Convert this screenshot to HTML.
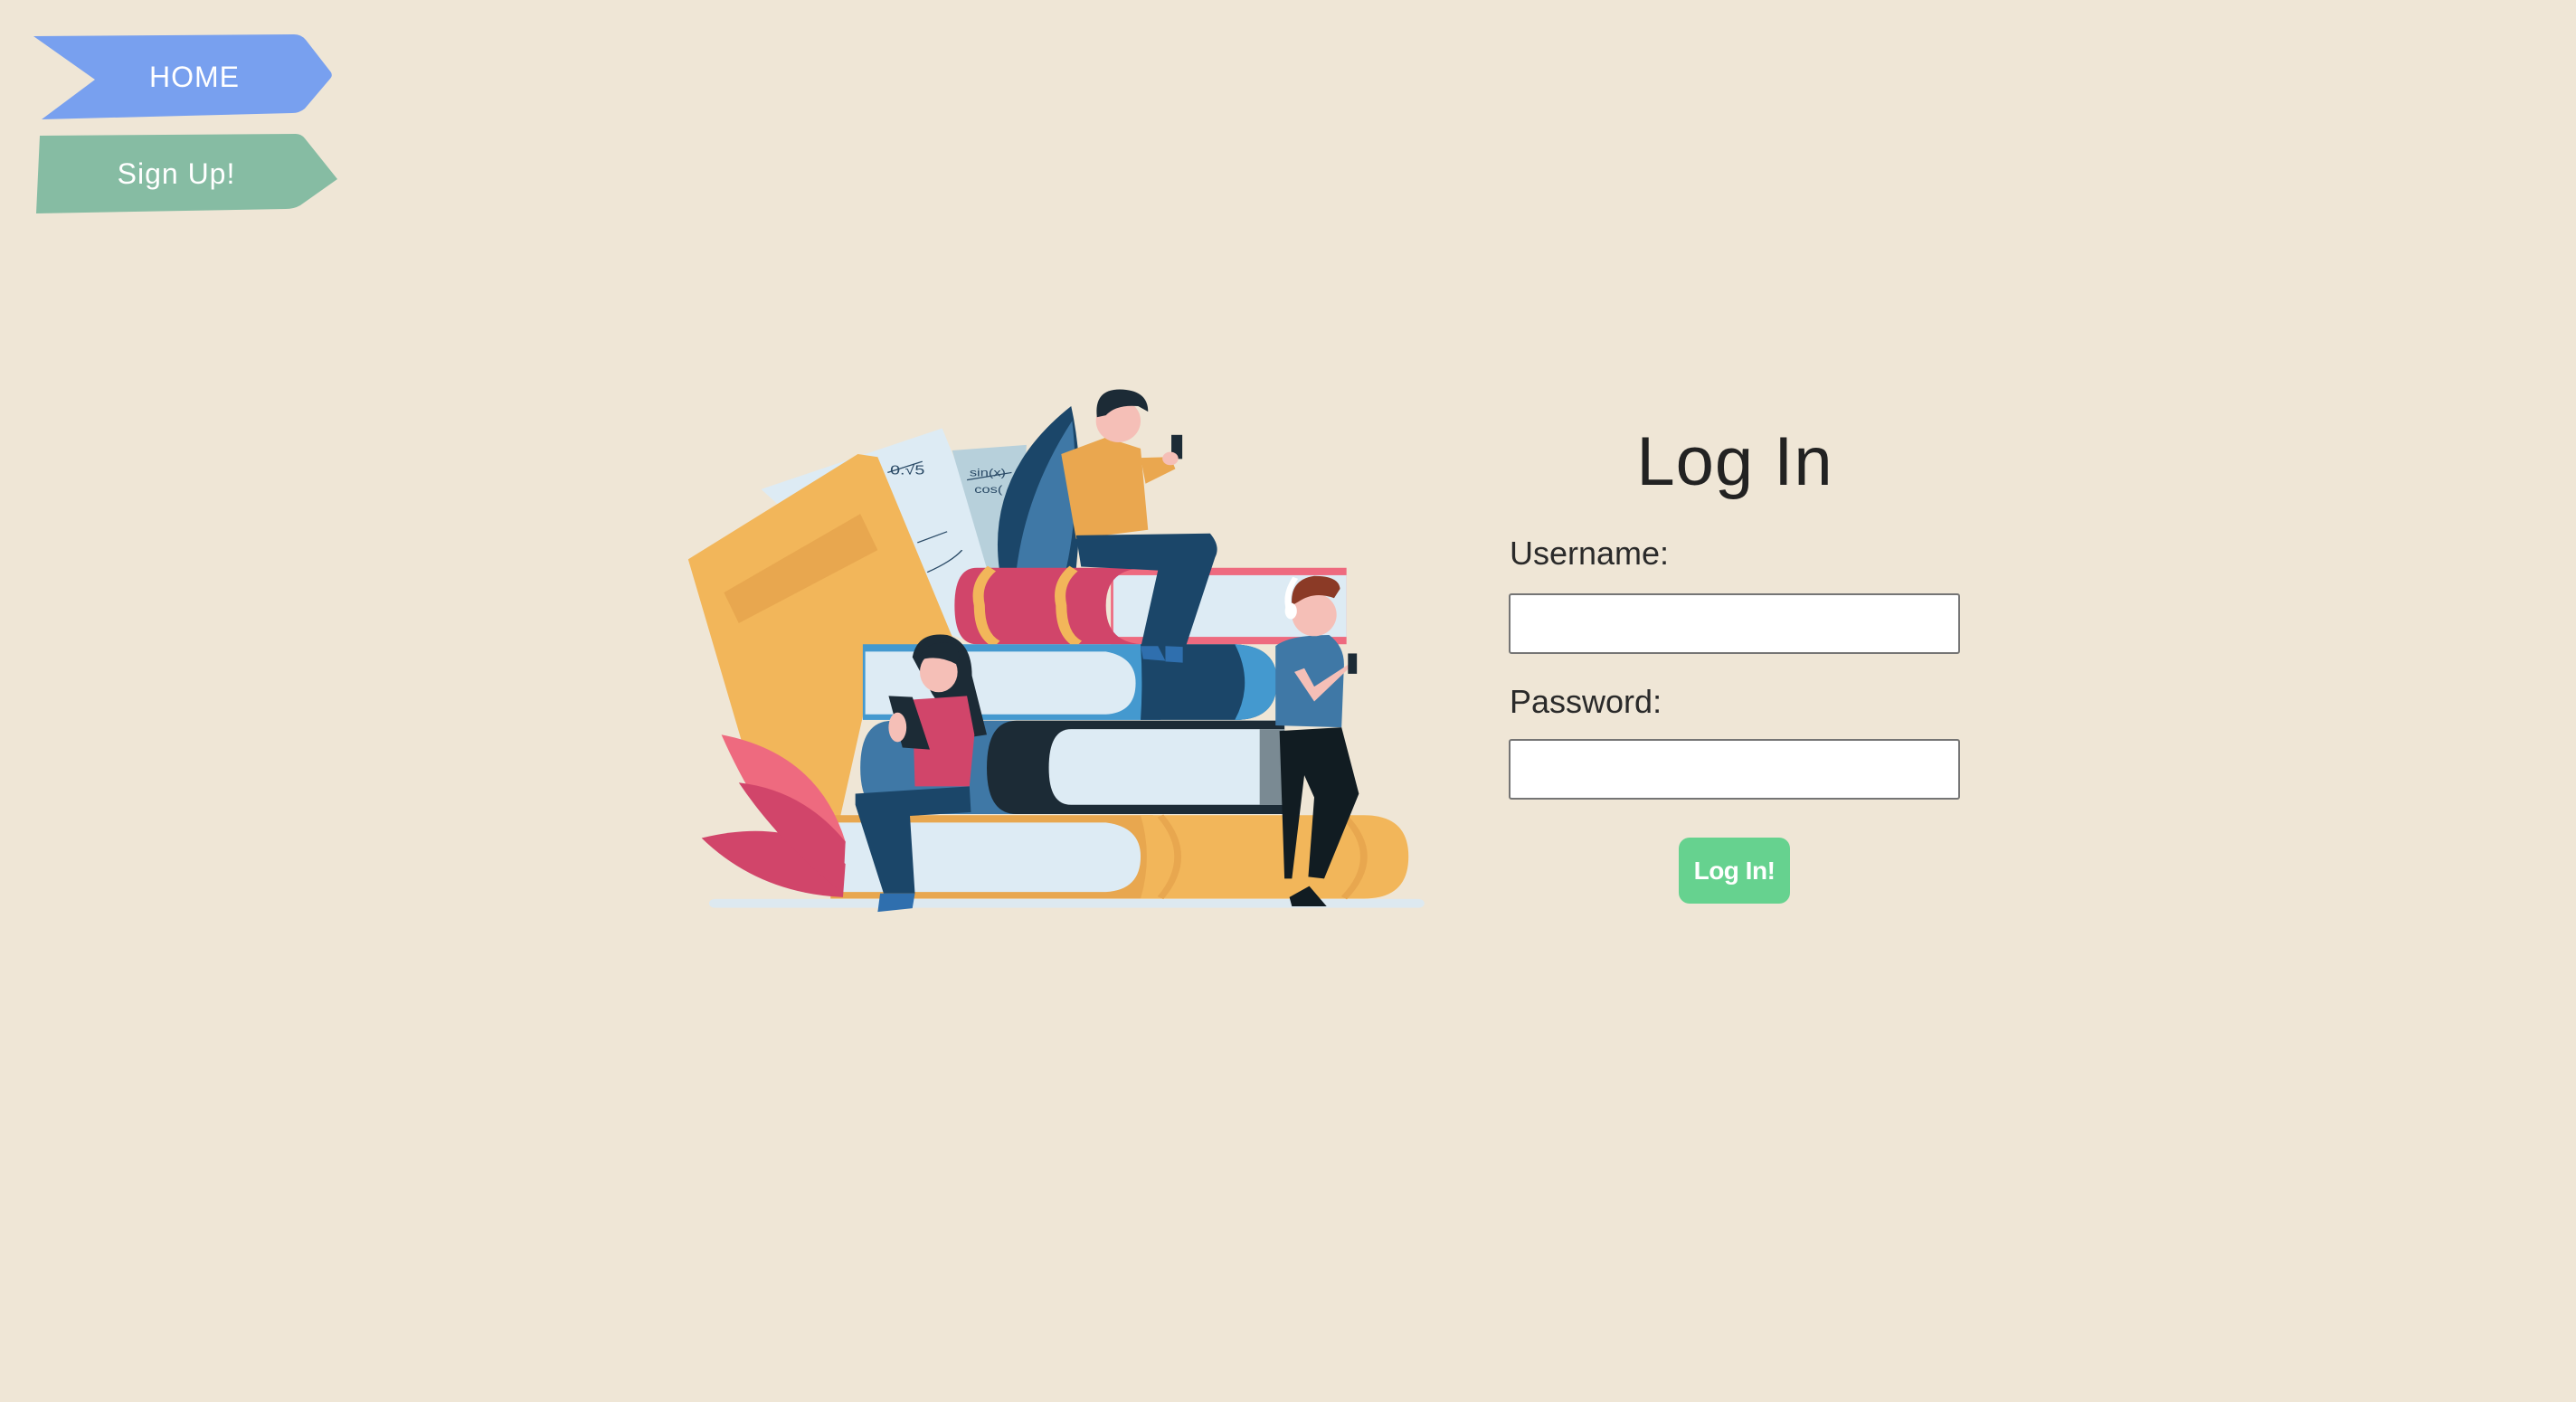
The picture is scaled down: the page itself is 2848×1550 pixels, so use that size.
<!DOCTYPE html>
<html><head><meta charset="utf-8">
<style>
html,body{margin:0;padding:0;}
body{width:2848px;height:1550px;background:#EFE6D6;position:relative;overflow:hidden;font-family:"Liberation Sans",sans-serif;}
.nav{position:absolute;left:0;top:0;}
.nav span{position:absolute;color:#fff;font-size:32px;letter-spacing:1px;transform:translateX(-50%);white-space:nowrap;}
h1{position:absolute;left:1918px;top:467px;transform:translateX(-50%);margin:0;font-weight:normal;font-size:76px;color:#222;white-space:nowrap;letter-spacing:1px;}
.lbl{position:absolute;left:1669px;font-size:36px;color:#2a2a2a;}
.inp{position:absolute;left:1668px;width:495px;height:63px;background:#fff;border:2px solid #757575;border-radius:3px;}
.btn{position:absolute;left:1856px;top:926px;width:123px;height:73px;background:#66D28F;border-radius:12px;color:#fff;font-weight:bold;font-size:28px;text-align:center;line-height:73px;letter-spacing:-0.5px;}
</style></head><body>
<svg class="nav" width="420" height="260" viewBox="0 0 420 260">
<path d="M37,40 L325,38 Q333,38 338,44 L366,80 Q368,84 365,87 L337,120 Q331,125 323,125 L46,132 L105,88 Z" fill="#78A0EF"/>
<path d="M44,150 L327,148 Q333,148 337,153 L373,198 L332,227 Q325,231 316,231 L40,236 Z" fill="#86BCA3"/>
</svg>
<div class="nav"><span style="left:215px;top:67px">HOME</span><span style="left:195px;top:174px">Sign Up!</span></div>

<svg style="position:absolute;left:740px;top:400px" width="860" height="640" viewBox="0 0 1568 1568" preserveAspectRatio="none">
<rect x="80" y="1455" width="1442" height="24" rx="12" fill="#DDE9F0"/>
<polygon points="185,345 550,180 665,560 590,750 470,690" fill="#DDEBF4"/>
<polygon points="570,240 720,225 705,560 640,560" fill="#B7D0DB"/>
<g stroke="#2a4a66" stroke-width="3" fill="none"><path d="M440,300 L510,270"/><path d="M500,490 L560,460"/><path d="M520,570 Q570,540 590,510"/><path d="M600,320 L690,300"/></g>
<text x="445" y="305" font-size="36" fill="#2a4a66" font-family="Liberation Sans">0.√5</text>
<text x="605" y="310" font-size="30" fill="#2a4a66" font-family="Liberation Sans">sin(x)</text>
<text x="615" y="355" font-size="30" fill="#2a4a66" font-family="Liberation Sans">cos(</text>
<polygon points="38,535 380,250 420,258 575,760 395,780 390,960 345,1230 190,1230" fill="#F2B65A"/>
<polygon points="110,625 385,412 420,510 140,708" fill="#E8A74F"/>
<path d="M665,560 Q640,300 810,120 Q840,300 820,560 Z" fill="#1B4669"/>
<path d="M700,560 Q720,350 812,160 Q830,380 800,560 Z" fill="#3F78A6"/>
<rect x="890" y="558" width="475" height="207" fill="#EE6A7F"/>
<rect x="895" y="578" width="470" height="167" fill="#DDEBF4"/>
<path d="M620,558 L960,558 Q880,560 880,660 Q880,765 960,765 L620,765 Q575,765 575,660 Q575,558 620,558 Z" fill="#D1456A"/>
<path d="M650,560 Q615,600 625,660 Q625,740 660,765" stroke="#F2B65A" stroke-width="22" fill="none"/>
<path d="M815,560 Q780,600 790,660 Q790,740 825,765" stroke="#F2B65A" stroke-width="22" fill="none"/>
<rect x="390" y="765" width="600" height="205" fill="#4499CF"/>
<path d="M395,785 L880,785 Q940,800 940,870 Q940,950 880,955 L395,955 Z" fill="#DDEBF4"/>
<path d="M950,765 L1140,765 Q1225,770 1225,865 Q1225,970 1140,970 L950,970 Q955,870 950,765 Z" fill="#1B4669"/>
<path d="M1140,765 Q1225,770 1225,865 Q1225,970 1140,970 Q1180,870 1140,765 Z" fill="#4499CF"/>
<path d="M450,972 L1240,972 L1240,1225 L450,1225 Q385,1225 385,1100 Q385,972 450,972 Z" fill="#3F78A6"/>
<path d="M700,972 L1240,972 L1240,1225 L700,1225 Q640,1225 640,1100 Q640,972 700,972 Z" fill="#1C2B36"/>
<path d="M810,995 L1240,995 L1240,1200 L810,1200 Q765,1200 765,1100 Q765,995 810,995 Z" fill="#DDEBF4"/>
<rect x="1190" y="995" width="50" height="205" fill="#7A8A93"/>
<rect x="325" y="1228" width="650" height="226" fill="#E8A74F"/>
<path d="M325,1248 L880,1248 Q950,1260 950,1340 Q950,1430 880,1436 L325,1436 Z" fill="#DDEBF4"/>
<path d="M950,1228 L1400,1228 Q1490,1228 1490,1340 Q1490,1454 1400,1454 L950,1454 Q975,1340 950,1228 Z" fill="#F2B65A"/>
<path d="M990,1230 Q1060,1340 990,1452 M1360,1230 Q1440,1340 1360,1452" stroke="#E8A74F" stroke-width="14" fill="none"/>
<path d="M105,1010 Q300,1060 355,1300 L345,1450 Q200,1300 105,1010 Z" fill="#EE6A7F"/>
<path d="M65,1290 Q250,1230 355,1360 L350,1450 Q180,1440 65,1290 Z" fill="#D1456A"/>
<path d="M140,1140 Q270,1160 355,1300 L350,1440 Q220,1300 140,1140 Z" fill="#D1456A"/>
<path d="M790,250 L880,205 L950,235 L965,455 L820,480 Z" fill="#EAA74F"/>
<path d="M950,260 L1010,258 L1020,290 L960,330 Z" fill="#EAA74F"/>
<rect x="1012" y="198" width="22" height="65" fill="#1C2B36"/>
<ellipse cx="1010" cy="262" rx="16" ry="18" fill="#F5BFB7"/>
<ellipse cx="905" cy="160" rx="45" ry="58" fill="#F5BFB7"/>
<path d="M862,150 Q855,70 915,75 Q965,80 965,135 L945,120 Q900,115 880,145 Z" fill="#1C2B36"/>
<path d="M820,470 L1090,465 Q1112,500 1100,530 L1040,775 L950,775 L985,565 L830,555 Z" fill="#1B4669"/>
<path d="M950,770 L985,770 L1000,810 L955,805 Z M1000,770 L1035,772 L1035,815 L1000,812 Z" fill="#2F6FAE"/>
<path d="M490,800 Q500,730 560,740 Q610,760 610,850 L640,1010 L590,1020 L530,900 Z" fill="#1C2B36"/>
<ellipse cx="543" cy="840" rx="38" ry="55" fill="#F5BFB7"/>
<path d="M500,810 Q520,745 575,765 Q590,790 580,820 Q540,790 500,810 Z" fill="#1C2B36"/>
<path d="M490,915 L600,905 L615,1010 L605,1150 L495,1150 Z" fill="#D1456A"/>
<polygon points="442,905 490,908 525,1050 470,1045" fill="#1C2B36"/>
<ellipse cx="460" cy="990" rx="18" ry="40" fill="#F5BFB7"/>
<path d="M375,1170 L605,1150 L608,1220 L485,1230 L495,1440 L432,1440 L375,1200 Z" fill="#1B4669"/>
<path d="M425,1440 L495,1440 L490,1480 L420,1490 Z" fill="#2F6FAE"/>
<path d="M1230,1000 L1355,990 L1390,1170 L1320,1400 L1288,1395 L1300,1180 L1280,1120 L1255,1400 L1240,1400 Z" fill="#111C22"/>
<path d="M1250,1450 L1290,1420 L1325,1475 L1255,1475 Z" fill="#111C22"/>
<path d="M1222,770 Q1250,740 1330,740 Q1360,770 1360,820 L1355,990 L1222,985 Z" fill="#3F78A6"/>
<path d="M1260,840 L1300,920 L1370,830 L1380,810 L1300,880 L1280,830 Z" fill="#F5BFB7"/>
<rect x="1368" y="790" width="18" height="55" fill="#1C2B36"/>
<ellipse cx="1300" cy="685" rx="45" ry="58" fill="#F5BFB7"/>
<path d="M1255,660 Q1250,590 1300,580 Q1350,580 1352,615 L1340,640 Q1300,620 1268,650 Z" fill="#8B3A26"/>
<path d="M1255,690 Q1235,640 1262,585" stroke="#fff" stroke-width="12" fill="none"/>
<ellipse cx="1253" cy="675" rx="12" ry="22" fill="#fff"/>
</svg>

<h1>Log In</h1>
<div class="lbl" style="top:591px">Username:</div>
<div class="inp" style="top:656px"></div>
<div class="lbl" style="top:755px">Password:</div>
<div class="inp" style="top:817px"></div>
<div class="btn">Log In!</div>
</body></html>
